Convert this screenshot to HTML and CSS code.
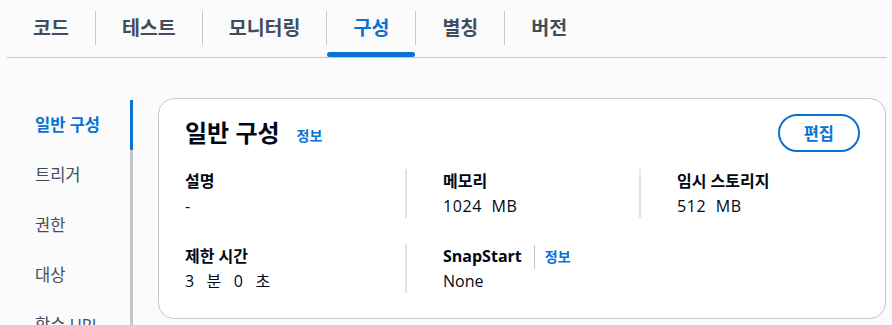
FILE: index.html
```html
<!DOCTYPE html>
<html lang="ko">
<head>
  <meta charset="utf-8">
  <title>구성</title>
  <link rel="stylesheet" href="styles.css">
</head>
<body>
  <div class="tabs">
    <div class="tab"><span class="tab-label first">코드</span></div>
    <div class="tab"><span class="tab-label">테스트</span></div>
    <div class="tab"><span class="tab-label">모니터링</span></div>
    <div class="tab active"><span class="tab-label">구성</span></div>
    <div class="tab"><span class="tab-label">별칭</span></div>
    <div class="tab"><span class="tab-label">버전</span></div>
  </div>

  <div class="main">
    <nav class="side">
      <a href="#" class="side-item active">일반 구성</a>
      <a href="#" class="side-item">트리거</a>
      <a href="#" class="side-item">권한</a>
      <a href="#" class="side-item">대상</a>
      <a href="#" class="side-item">함수 URL</a>
    </nav>

    <section class="card">
      <div class="card-head">
        <h2>일반 구성</h2>
        <a href="#" class="info">정보</a>
        <button class="btn">편집</button>
      </div>
      <div class="grid">
        <div class="cell">
          <div class="label">설명</div>
          <div class="value">-</div>
        </div>
        <div class="cell split">
          <div class="label">메모리</div>
          <div class="value num">1024  MB</div>
        </div>
        <div class="cell split">
          <div class="label">임시 스토리지</div>
          <div class="value num">512  MB</div>
        </div>
        <div class="cell">
          <div class="label">제한 시간</div>
          <div class="value">3   분   0   초</div>
        </div>
        <div class="cell split">
          <div class="label">SnapStart<a href="#" class="info small-info">정보</a></div>
          <div class="value">None</div>
        </div>
      </div>
    </section>
  </div>
</body>
</html>
```

FILE: styles.css
```css
body {
    margin: 0;
    background: #fbfbfb;
    font-family: "Open Sans", "Noto Sans CJK KR", sans-serif;
    color: #000716;
    overflow: hidden;
}

a { text-decoration: none; }

/* tabs */
.tabs {
    display: flex;
    margin: 0 5px 0 7px;
    border-bottom: 1px solid #c6c6cd;
}
.tab {
    position: relative;
    padding: 11px 0 12px;
}
.tab-label {
    display: block;
    line-height: 34px;
    padding: 0 26px;
    border-left: 1px solid #c6c6cd;
    font-size: 19.5px;
    font-weight: bold;
    color: #414d5c;
}
.tab-label.first { border-left: 0; }
.tab.active .tab-label { color: #0972d3; }
.tab.active::after {
    content: "";
    position: absolute;
    left: 1px;
    right: 0;
    bottom: 0;
    height: 5px;
    border-radius: 3px;
    background: #0972d3;
}

/* layout */
.main {
    display: flex;
    align-items: flex-start;
    margin-top: 40px;
    margin-right: 6px;
}

.side {
    margin-top: 2px;
    width: 133px;
    flex: none;
}
.side-item {
    display: block;
    height: 50px;
    line-height: 50px;
    padding-left: 35px;
    font-size: 16.5px;
    color: #414d5c;
    border-right: 3px solid #c6c6cd;
    white-space: nowrap;
}
.side-item.active {
    color: #0972d3;
    font-weight: bold;
    border-right-color: #0972d3;
}

/* card */
.card {
    flex: 1;
    margin-left: 25px;
    background: #fff;
    border: 1px solid #c6c6cd;
    border-radius: 16px;
    padding: 15px 25px 25px 26px;
}
.card-head {
    display: flex;
    align-items: center;
    height: 38px;
}
.card-head h2 {
    margin: 0;
    font-size: 24px;
    font-weight: bold;
    line-height: 38px;
}
.info {
    margin-left: 17px;
    margin-top: 3px;
    font-size: 14px;
    font-weight: bold;
    color: #0972d3;
}
.btn {
    margin-left: auto;
    height: 38px;
    padding: 0 24px;
    border: 2px solid #0972d3;
    border-radius: 20px;
    background: #fff;
    color: #0972d3;
    font-family: inherit;
    font-size: 16.5px;
    font-weight: bold;
}

.grid {
    display: grid;
    grid-template-columns: 220px 234px 1fr;
    row-gap: 26px;
    margin-top: 17px;
}
.cell {
    font-size: 16px;
}
.cell.split {
    border-left: 2px solid #e2e3e6;
    padding-left: 36px;
}
.label {
    display: flex;
    align-items: center;
    line-height: 25px;
    font-weight: bold;
}
.small-info {
    margin: 0 0 0 12px;
    padding-left: 10px;
    border-left: 1px solid #c6c6cd;
    line-height: 24px;
}
.value {
    line-height: 24px;
    white-space: pre;
}
.num { letter-spacing: 0.6px; }
```
